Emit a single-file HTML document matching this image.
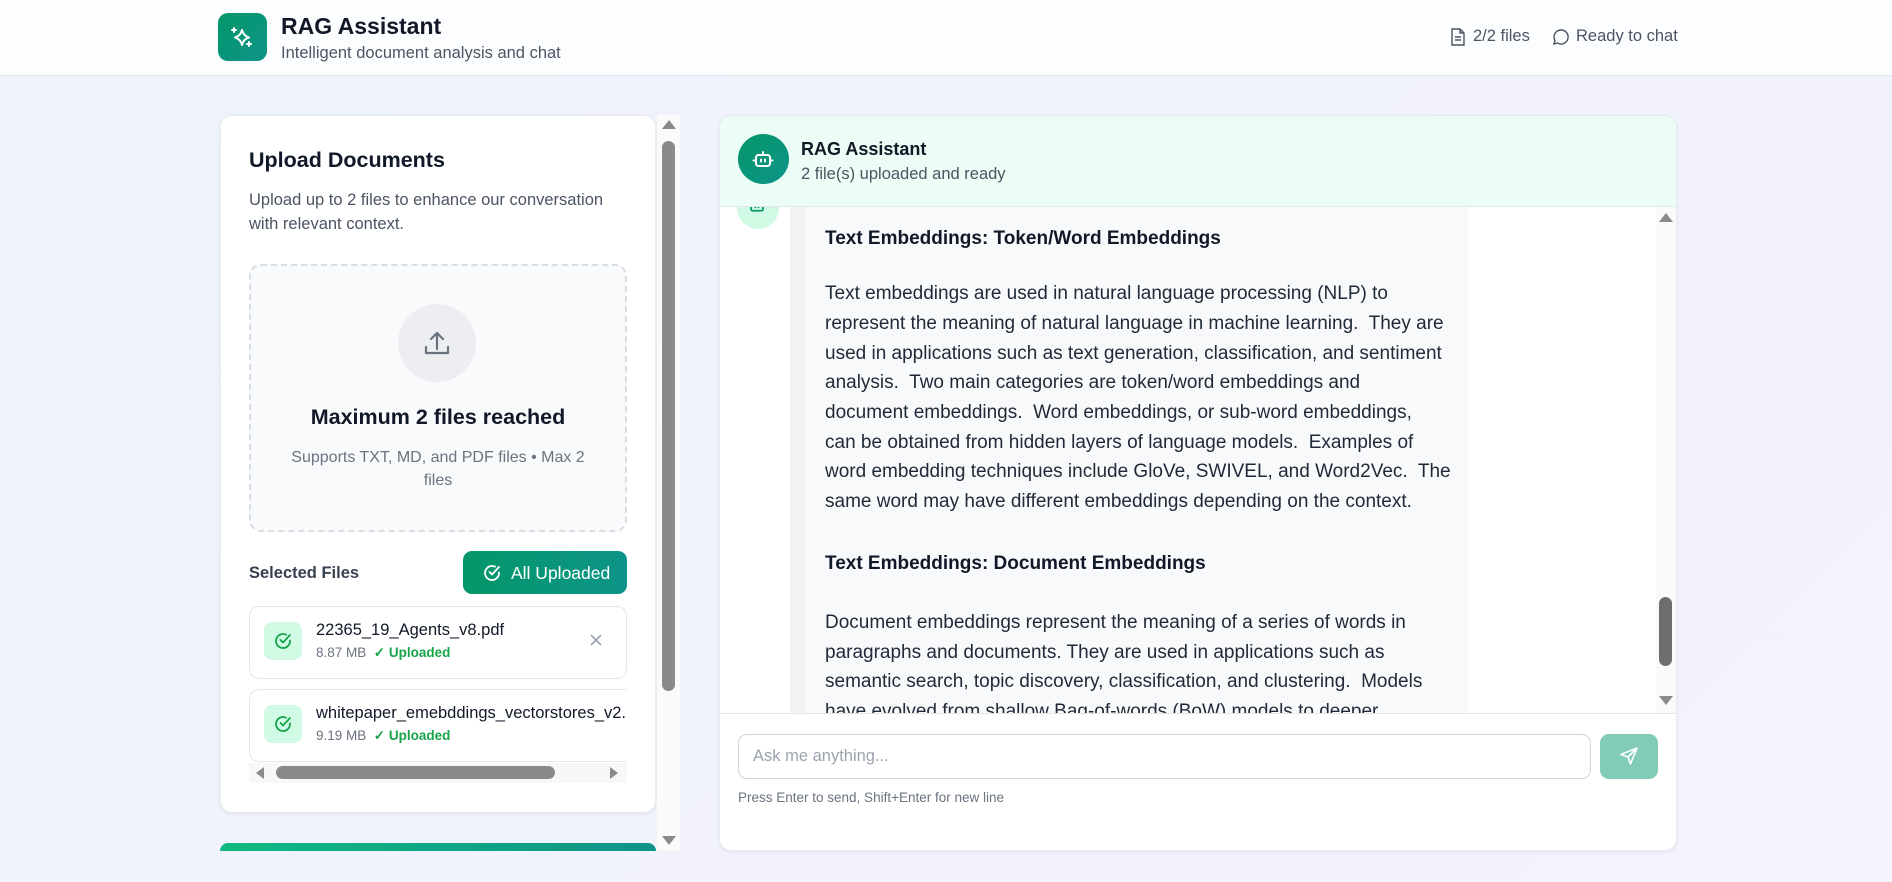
<!DOCTYPE html>
<html><head><meta charset="utf-8"><style>
*{box-sizing:border-box;margin:0;padding:0}
body{width:1892px;height:882px;overflow:hidden;font-family:"Liberation Sans",sans-serif;background:linear-gradient(135deg,#eef3fb 0%,#f1f2fc 60%,#f4f2fd 100%);position:relative;color:#111827}
.abs{position:absolute}
.hdr{left:0;top:0;width:1892px;height:76px;background:#fcfdff;border-bottom:1px solid #e3e8f1}
.logo{left:218px;top:13px;width:49px;height:48px;border-radius:10px;background:linear-gradient(135deg,#059669,#0d9488)}
.card{background:#fff;border-radius:12px;box-shadow:0 1px 3px rgba(0,0,0,.08);border:1px solid #e8ecf2}
.nw{white-space:nowrap}
.msg div{position:absolute;left:825px;white-space:nowrap;font-size:19px;color:#1f2937}
.msg b{font-weight:bold;color:#111827}
</style></head><body>
<div class="abs hdr"></div>
<div class="abs logo"><svg width="49" height="48" viewBox="0 0 49 48"><g fill="none" stroke="#fff" stroke-width="2" stroke-linejoin="round" stroke-linecap="round"><path d="M24 17 Q25.5 23 31 24.5 Q25.5 26 24 32 Q22.5 26 17 24.5 Q22.5 23 24 17Z"/><path d="M16 15v4M14 17h4M31 29v4M29 31h4"/></g></svg></div>
<div class="abs nw" style="left:281px;top:13px;font-size:23px;font-weight:bold;color:#111827">RAG Assistant</div>
<div class="abs nw" style="left:281px;top:44px;font-size:16.5px;color:#4b5563">Intelligent document analysis and chat</div>
<svg class="abs" style="left:1450px;top:28px" width="16" height="18" viewBox="0 0 16 18"><path d="M2 1h8l4 4v12H2z M10 1v4h4 M5 9h6 M5 12h6" fill="none" stroke="#4b5563" stroke-width="1.4"/></svg>
<div class="abs nw" style="left:1473px;top:27px;font-size:16.5px;color:#4b5563">2/2 files</div>
<svg class="abs" style="left:1552px;top:28px" width="18" height="18" viewBox="0 0 18 18"><path d="M9 2a7 7 0 1 1-3.5 13L2 16l1-3.5A7 7 0 0 1 9 2z" fill="none" stroke="#4b5563" stroke-width="1.4"/></svg>
<div class="abs nw" style="left:1576px;top:27px;font-size:16.5px;color:#4b5563">Ready to chat</div>

<!-- left card -->
<div class="abs card" style="left:220px;top:115px;width:436px;height:698px"></div>
<div class="abs nw" style="left:249px;top:148px;font-size:21.5px;font-weight:600;color:#111827">Upload Documents</div>
<div class="abs" style="left:249px;top:188px;width:380px;font-size:16.5px;line-height:24px;color:#4b5563">Upload up to 2 files to enhance our conversation with relevant context.</div>
<div class="abs" style="left:249px;top:264px;width:378px;height:268px;border:2px dashed #d9dee6;border-radius:12px;background:#f9fafb"></div>
<div class="abs" style="left:398px;top:304px;width:78px;height:78px;border-radius:50%;background:#eceef1"></div>
<svg class="abs" style="left:421px;top:327px" width="32" height="32" viewBox="0 0 32 32"><path d="M16 22V6M10 12l6-6 6 6M5 20v6h22v-6" fill="none" stroke="#6b7280" stroke-width="2.2" stroke-linecap="round" stroke-linejoin="round"/></svg>
<div class="abs nw" style="left:249px;top:405px;width:378px;text-align:center;font-size:21.5px;font-weight:600;color:#111827">Maximum 2 files reached</div>
<div class="abs" style="left:290px;top:446px;width:296px;text-align:center;font-size:16px;line-height:23px;color:#6b7280">Supports TXT, MD, and PDF files • Max 2 files</div>
<div class="abs nw" style="left:249px;top:564px;font-size:16.5px;font-weight:600;color:#374151">Selected Files</div>
<div class="abs" style="left:463px;top:551px;width:164px;height:43px;border-radius:9px;background:linear-gradient(90deg,#059669,#0d9488)"></div>
<svg class="abs" style="left:482px;top:563px" width="20" height="20" viewBox="0 0 20 20"><path d="M17 9.5V10a7 7 0 1 1-4-6.3M17 4l-7 7.5-2.5-2.5" fill="none" stroke="#fff" stroke-width="1.8" stroke-linecap="round" stroke-linejoin="round"/></svg>
<div class="abs nw" style="left:511px;top:563px;font-size:17.5px;color:#fff">All Uploaded</div>
<div class="abs" style="left:249px;top:604px;width:378px;height:160px;overflow:hidden">
 <div class="abs" style="left:0;top:2px;width:378px;height:73px;border:1px solid #e5e7eb;border-radius:10px;background:#fff"></div>
 <div class="abs" style="left:0;top:85px;width:400px;height:73px;border:1px solid #e5e7eb;border-radius:10px;background:#fff"></div>
</div>
<div class="abs" style="left:264px;top:622px;width:38px;height:38px;border-radius:8px;background:#d1fae5"></div>
<div class="abs" style="left:264px;top:705px;width:38px;height:38px;border-radius:8px;background:#d1fae5"></div>
<svg class="abs" style="left:273px;top:631px" width="20" height="20" viewBox="0 0 20 20"><path d="M17 9.5V10a7 7 0 1 1-4-6.3M17 4l-7 7.5-2.5-2.5" fill="none" stroke="#16a34a" stroke-width="1.8" stroke-linecap="round" stroke-linejoin="round"/></svg>
<svg class="abs" style="left:273px;top:714px" width="20" height="20" viewBox="0 0 20 20"><path d="M17 9.5V10a7 7 0 1 1-4-6.3M17 4l-7 7.5-2.5-2.5" fill="none" stroke="#16a34a" stroke-width="1.8" stroke-linecap="round" stroke-linejoin="round"/></svg>
<div class="abs nw" style="left:316px;top:621px;font-size:16.5px;color:#111827">22365_19_Agents_v8.pdf</div>
<div class="abs nw" style="left:316px;top:645px;font-size:13.5px;color:#6b7280">8.87 MB &nbsp;<span style="color:#16a34a;font-weight:bold">✓ Uploaded</span></div>
<div class="abs" style="left:316px;top:704px;width:311px;overflow:hidden"><div class="nw" style="font-size:16.5px;color:#111827">whitepaper_emebddings_vectorstores_v2.pdf</div></div>
<div class="abs nw" style="left:316px;top:728px;font-size:13.5px;color:#6b7280">9.19 MB &nbsp;<span style="color:#16a34a;font-weight:bold">✓ Uploaded</span></div>
<svg class="abs" style="left:589px;top:633px" width="14" height="14" viewBox="0 0 14 14"><path d="M2 2l10 10M12 2L2 12" stroke="#9ca3af" stroke-width="1.6"/></svg>
<div class="abs" style="left:249px;top:763px;width:378px;height:20px;background:#f8f8f8"></div>
<div class="abs" style="left:256px;top:767px;width:0;height:0;border-top:6px solid transparent;border-bottom:6px solid transparent;border-right:8px solid #8a8a8a"></div>
<div class="abs" style="left:276px;top:766px;width:279px;height:13px;border-radius:7px;background:#8a8a8a"></div>
<div class="abs" style="left:610px;top:767px;width:0;height:0;border-top:6px solid transparent;border-bottom:6px solid transparent;border-left:8px solid #8a8a8a"></div>
<div class="abs" style="left:220px;top:843px;width:436px;height:8px;border-radius:12px 12px 0 0;background:linear-gradient(90deg,#10b981,#0d9488)"></div>
<!-- left scrollbar -->
<div class="abs" style="left:657px;top:115px;width:23px;height:736px;background:#fafafa"></div>
<div class="abs" style="left:662px;top:120px;width:0;height:0;border-left:7px solid transparent;border-right:7px solid transparent;border-bottom:9px solid #8a8a8a"></div>
<div class="abs" style="left:662px;top:141px;width:13px;height:550px;border-radius:7px;background:#8a8a8a"></div>
<div class="abs" style="left:662px;top:836px;width:0;height:0;border-left:7px solid transparent;border-right:7px solid transparent;border-top:9px solid #8a8a8a"></div>

<!-- chat card -->
<div class="abs card" style="left:719px;top:115px;width:958px;height:736px;overflow:hidden">
 <div class="abs" style="left:0;top:0;width:958px;height:91px;background:#ecfdf5;border-bottom:1px solid #e3e8ee"></div>
 <div class="abs" style="left:0;top:597px;width:958px;height:1px;background:#e5e7eb"></div>
</div>
<div class="abs" style="left:738px;top:134px;width:51px;height:50px;border-radius:50%;background:linear-gradient(135deg,#059669,#0d9488)"></div>
<svg class="abs" style="left:751px;top:147px" width="24" height="24" viewBox="0 0 24 24"><g fill="none" stroke="#fff" stroke-width="2" stroke-linecap="round"><rect x="5" y="8" width="14" height="11" rx="2.5"/><path d="M12 8V5M2.5 13.5h2M19.5 13.5h2M10 12.5v2M14 12.5v2"/></g></svg>
<div class="abs nw" style="left:801px;top:139px;font-size:18px;font-weight:600;color:#111827">RAG Assistant</div>
<div class="abs nw" style="left:801px;top:165px;font-size:16.5px;color:#4b5563">2 file(s) uploaded and ready</div>
<!-- messages -->
<div class="abs" style="left:720px;top:207px;width:937px;height:506px;overflow:hidden">
 <div class="abs" style="left:17px;top:-20px;width:42px;height:42px;border-radius:50%;background:#d1fae5"></div>
 <svg class="abs" style="left:28px;top:-6px" width="18" height="18" viewBox="0 0 24 24"><g fill="none" stroke="#059669" stroke-width="2.4" stroke-linecap="round"><rect x="4" y="2" width="16" height="11" rx="2.5"/><path d="M10 6.5v2M14 6.5v2"/></g></svg>
 <div class="abs" style="left:70px;top:0;width:16px;height:506px;background:#f1f3f5"></div>
 <div class="abs" style="left:85px;top:0;width:663px;height:506px;background:#f8f9fb"></div>
</div>
<div class="abs msg" style="left:0;top:0;width:1px;height:1px">
 <div style="top:228px"><b>Text Embeddings: Token/Word Embeddings</b></div>
 <div style="top:283px">Text embeddings are used in natural language processing (NLP) to</div>
 <div style="top:313px">represent the meaning of natural language in machine learning.&nbsp; They are</div>
 <div style="top:343px">used in applications such as text generation, classification, and sentiment</div>
 <div style="top:372px">analysis.&nbsp; Two main categories are token/word embeddings and</div>
 <div style="top:402px">document embeddings.&nbsp; Word embeddings, or sub-word embeddings,</div>
 <div style="top:432px">can be obtained from hidden layers of language models.&nbsp; Examples of</div>
 <div style="top:461px">word embedding techniques include GloVe, SWIVEL, and Word2Vec.&nbsp; The</div>
 <div style="top:491px">same word may have different embeddings depending on the context.</div>
 <div style="top:553px"><b>Text Embeddings: Document Embeddings</b></div>
 <div style="top:612px">Document embeddings represent the meaning of a series of words in</div>
 <div style="top:642px">paragraphs and documents. They are used in applications such as</div>
 <div style="top:671px">semantic search, topic discovery, classification, and clustering.&nbsp; Models</div>
</div>
<div class="abs" style="left:805px;top:690px;width:663px;height:23px;overflow:hidden"><div class="abs nw" style="left:20px;top:11px;font-size:19px;color:#1f2937">have evolved from shallow Bag-of-words (BoW) models to deeper</div></div>
<div class="abs" style="left:1656px;top:207px;width:20px;height:506px;background:#fafafa"></div>
<div class="abs" style="left:1659px;top:213px;width:0;height:0;border-left:7px solid transparent;border-right:7px solid transparent;border-bottom:9px solid #8a8a8a"></div>
<div class="abs" style="left:1659px;top:597px;width:13px;height:69px;border-radius:7px;background:#6e6e6e"></div>
<div class="abs" style="left:1659px;top:696px;width:0;height:0;border-left:7px solid transparent;border-right:7px solid transparent;border-top:9px solid #8a8a8a"></div>
<!-- input -->
<div class="abs" style="left:738px;top:734px;width:853px;height:45px;border:1px solid #d1d5db;border-radius:9px;background:#fff"></div>
<div class="abs nw" style="left:753px;top:747px;font-size:16.5px;color:#9ca3af">Ask me anything...</div>
<div class="abs" style="left:1600px;top:734px;width:58px;height:45px;border-radius:9px;background:#81cbb8"></div>
<svg class="abs" style="left:1619px;top:746px" width="20" height="20" viewBox="0 0 20 20"><path d="M18 2L2 8.5l7 2.5 2.5 7z M18 2L9 11" fill="none" stroke="#fff" stroke-width="1.6" stroke-linejoin="round"/></svg>
<div class="abs nw" style="left:738px;top:790px;font-size:13.5px;color:#6b7280">Press Enter to send, Shift+Enter for new line</div>
</body></html>
